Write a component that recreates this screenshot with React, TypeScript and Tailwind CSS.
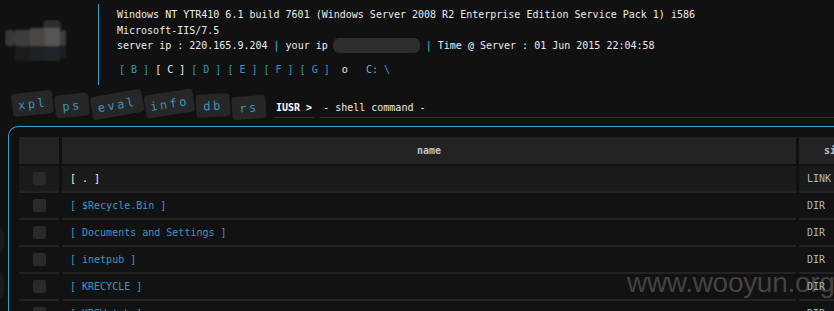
import React from "react";

const mono = { fontFamily: '"DejaVu Sans Mono", "Liberation Mono", monospace' };

const tabs = [
  { t: "xpl", w: "w-[41px]", r: "-rotate-[6deg]", m: "mt-[1px]" },
  { t: "ps", w: "w-[34px]", r: "-rotate-[6deg]", m: "mt-[3px]" },
  { t: "eval", w: "w-[52px]", r: "-rotate-[10deg]", m: "mt-[2px]" },
  { t: "info", w: "w-[49px]", r: "-rotate-[9deg]", m: "mt-[1px]" },
  { t: "db", w: "w-[34px]", r: "-rotate-[3deg]", m: "mt-[3px]" },
  { t: "rs", w: "w-[34px]", r: "-rotate-[4deg]", m: "mt-[5px]" },
];

const rows = [
  { n: "[ . ]", s: "LINK" },
  { n: "[ $Recycle.Bin ]", s: "DIR" },
  { n: "[ Documents and Settings ]", s: "DIR" },
  { n: "[ inetpub ]", s: "DIR" },
  { n: "[ KRECYCLE ]", s: "DIR" },
  { n: "[ KRSWatch ]", s: "DIR" },
];

function Blob() {
  return (
    <svg width="62" height="44" viewBox="0 0 62 44">
      <defs>
        <filter id="bl" x="-10%" y="-10%" width="120%" height="120%">
          <feGaussianBlur stdDeviation="0.8" />
        </filter>
      </defs>
      <g filter="url(#bl)">
        <rect x="38" y="0" width="18" height="12" rx="5" fill="#2e2e2e" />
        <rect x="0" y="10" width="10" height="16" rx="4" fill="#383838" />
        <rect x="10" y="10" width="15" height="16" fill="#3e3e3e" />
        <rect x="25" y="8" width="15" height="18" fill="#4b4645" />
        <rect x="40" y="8" width="15" height="18" fill="#545454" />
        <rect x="55" y="10" width="6" height="16" rx="3" fill="#3e3e3e" />
        <rect x="10" y="26" width="15" height="15" rx="3" fill="#1d1d1d" />
        <rect x="25" y="26" width="15" height="15" fill="#1e2125" />
        <rect x="40" y="26" width="15" height="15" fill="#1a252b" />
        <rect x="55" y="26" width="6" height="13" rx="3" fill="#1c1c1c" />
      </g>
    </svg>
  );
}

export default function App() {
  return (
    <div
      className="relative w-[834px] h-[311px] overflow-hidden bg-[#111111] text-[10px] text-[#ececec]"
      style={mono}
    >
      {/* left edge faint circles */}
      <div className="absolute left-[-24px] top-[222px] w-[28px] h-[36px] rounded-full bg-[#1b1b1b]" />
      <div className="absolute left-[-24px] top-[268px] w-[28px] h-[36px] rounded-full bg-[#1b1b1b]" />

      {/* header */}
      <div className="flex pt-[4px]">
        <div className="w-[98px] flex-none pt-[16px] pl-[5px]">
          <Blob />
        </div>
        <div className="h-[81px] border-l-[1.5px] border-[#3a9ec2] pl-[18px] pt-[3px] leading-[15.5px] whitespace-pre">
          <div>Windows NT YTR410 6.1 build 7601 (Windows Server 2008 R2 Enterprise Edition Service Pack 1) i586</div>
          <div>Microsoft-IIS/7.5</div>
          <div className="flex items-center">
            <span>server ip : 220.165.9.204 </span>
            <span className="text-[#3a9ec2] font-bold">|</span>
            <span> your ip</span>
            <span className="inline-block w-[87px] h-[15px] rounded-[6px] bg-[#2e2e2e] ml-[5px] mr-[6px]" />
            <span className="text-[#3a9ec2] font-bold">|</span>
            <span> Time @ Server : 01 Jun 2015 22:04:58</span>
          </div>
          <div className="mt-[8px] pl-[2px] text-[#3a96bd]">
            <span>[ B ] </span>
            <span className="text-[#ececec]">[ C ]</span>
            <span> [ D ] [ E ] [ F ] [ G ]  </span>
            <span className="text-[#ececec]">o</span>
            <span>   </span>
            <span className="text-[#7fb0cc]">C:</span>
            <span> \</span>
          </div>
        </div>
      </div>

      {/* tabs + prompt */}
      <div className="flex items-start h-[30px] mt-[6px] pl-[12px]">
        <div className="flex gap-[2px]">
          {tabs.map((t) => (
            <div
              key={t.t}
              className={`${t.w} ${t.r} ${t.m} h-[23px] rounded-[4px] bg-[#272727] flex items-center justify-center text-[12px] tracking-[2.5px] text-[#4190b8]`}
            >
              {t.t}
            </div>
          ))}
        </div>
        <div className="ml-[8px] mt-[9px] h-[18px] px-[2px] border-b border-[#333333] leading-[16px] font-bold text-white">
          IUSR &gt;
        </div>
        <div className="ml-[6px] mt-[9px] h-[18px] flex-1 pl-[3px] border-b border-[#333333] leading-[16px] text-[#ececec] whitespace-pre">
          - shell command -
        </div>
      </div>

      {/* table container */}
      <div className="ml-[8px] mt-[5px] w-[900px] h-[300px] border-l-[1.5px] border-t-[1.5px] border-[#3d9ec0] rounded-tl-[10px] pl-[10px] pt-[10px]">
        <div className="flex gap-[3px] h-[27px] mb-[2px]">
          <div className="w-[40px] bg-[#232323]" />
          <div className="w-[734px] bg-[#232323] flex items-center justify-center font-bold text-[#b9c2ca]">name</div>
          <div className="w-[74px] bg-[#232323] flex items-center justify-center font-bold text-[#b9c2ca]">size</div>
        </div>
        {rows.map((r, i) => (
          <div key={i} className="flex gap-[3px]">
            <div className={`w-[40px] h-[27px] border-b-2 border-[#232323] flex items-center justify-center ${i === 0 ? "bg-[#1b1b1b]" : "bg-[#121212]"}`}>
              <div className="w-[13px] h-[13px] rounded-[2px] bg-[#2a2a2a]" />
            </div>
            <div className={`w-[734px] h-[27px] border-b-2 border-[#232323] flex items-center pl-[8px] whitespace-pre ${i === 0 ? "bg-[#1b1b1b] text-[#f0f0f0]" : "bg-[#121212] text-[#3a98c8]"}`}>
              {r.n}
            </div>
            <div className={`w-[74px] h-[27px] border-b-2 border-[#232323] flex items-center pl-[8px] text-[#a6b8c8] ${i === 0 ? "bg-[#1b1b1b]" : "bg-[#121212]"}`}>
              {r.s}
            </div>
          </div>
        ))}
      </div>

      {/* watermark */}
      <div
        className="absolute left-[627px] top-[265px] text-[28px] leading-[36px] text-[rgba(140,140,140,0.42)] tracking-[-0.3px]"
        style={{ fontFamily: '"Liberation Sans", Arial, sans-serif' }}
      >
        www.wooyun.org
      </div>
    </div>
  );
}
